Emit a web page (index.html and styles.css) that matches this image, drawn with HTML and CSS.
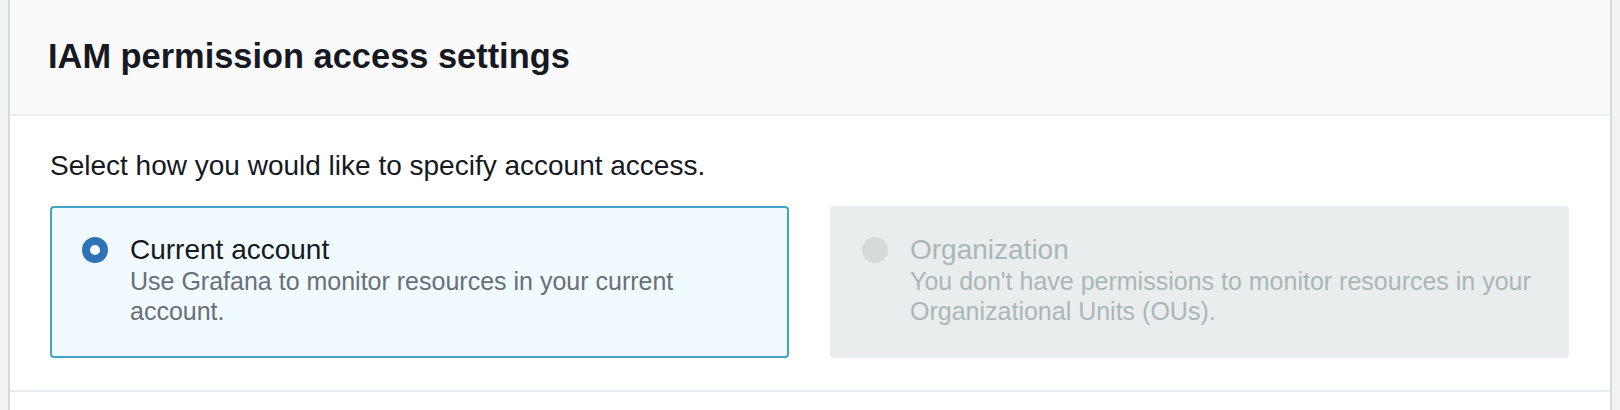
FILE: index.html
```html
<!DOCTYPE html>
<html lang="en">
<head>
<meta charset="utf-8">
<title>IAM permission access settings</title>
<link rel="stylesheet" href="styles.css">
</head>
<body>
<div class="page">
  <section class="panel">
    <header class="panel-header">
      <h2 class="panel-title">IAM permission access settings</h2>
    </header>
    <div class="panel-body">
      <p class="prompt">Select how you would like to specify account access.</p>
      <div class="tiles">
        <label class="tile tile-selected">
          <span class="radio radio-checked"></span>
          <span class="tile-text">
            <span class="tile-label">Current account</span>
            <span class="tile-desc">Use Grafana to monitor resources in your current account.</span>
          </span>
        </label>
        <label class="tile tile-disabled">
          <span class="radio radio-disabled"></span>
          <span class="tile-text">
            <span class="tile-label">Organization</span>
            <span class="tile-desc">You don't have permissions to monitor resources in your Organizational Units (OUs).</span>
          </span>
        </label>
      </div>
    </div>
    <div class="panel-footer"></div>
  </section>
</div>
</body>
</html>
```
FILE: styles.css
```css
* { box-sizing: border-box; }
html, body { margin: 0; padding: 0; }
body {
  background: #f2f3f3;
  font-family: "Liberation Sans", Arial, sans-serif;
  color: #16191f;
  width: 1620px;
  height: 410px;
  overflow: hidden;
}
.page {
  padding: 0 8px;
}
.panel {
  background: #ffffff;
  border-left: 2px solid #d5dbdb;
  border-right: 2px solid #d5dbdb;
}
.panel-header {
  background: #fafafa;
  border-bottom: 2px solid #eaeded;
  height: 116px;
  display: flex;
  align-items: center;
  padding: 0 38px 2px 38px;
}
.panel-title {
  margin: 0;
  font-size: 34.4px;
  line-height: 40px;
  font-weight: 700;
  color: #16191f;
}
.panel-body {
  padding: 32px 40px 32px 40px;
  border-bottom: 2px solid #eaeded;
}
.prompt {
  margin: 0 0 22px 0;
  font-size: 28px;
  line-height: 36px;
  color: #16191f;
}
.tiles {
  display: grid;
  grid-template-columns: 739px 739px;
  column-gap: 41px;
}
.tile {
  display: flex;
  align-items: flex-start;
  gap: 22px;
  height: 152px;
  padding: 26px 30px;
  border-radius: 4px;
}
.tile-selected {
  background: #f1faff;
  border: 2px solid #44a3c8;
}
.tile-disabled {
  background: #eaeded;
  border: 2px solid #eaeded;
}
.radio {
  flex: 0 0 26px;
  width: 26px;
  height: 26px;
  border-radius: 50%;
  margin-top: 3px;
}
.radio-checked {
  background: #ffffff;
  border: 8px solid #2e72b8;
}
.radio-disabled {
  background: #d5dbdb;
}
.tile-text {
  display: flex;
  flex-direction: column;
}
.tile-label {
  font-size: 28px;
  line-height: 32px;
  color: #16191f;
}
.tile-desc {
  font-size: 25px;
  line-height: 30px;
  color: #687078;
}
.tile-disabled .tile-label,
.tile-disabled .tile-desc {
  color: #aab7b8;
}
.panel-footer {
  height: 18px;
}
```
